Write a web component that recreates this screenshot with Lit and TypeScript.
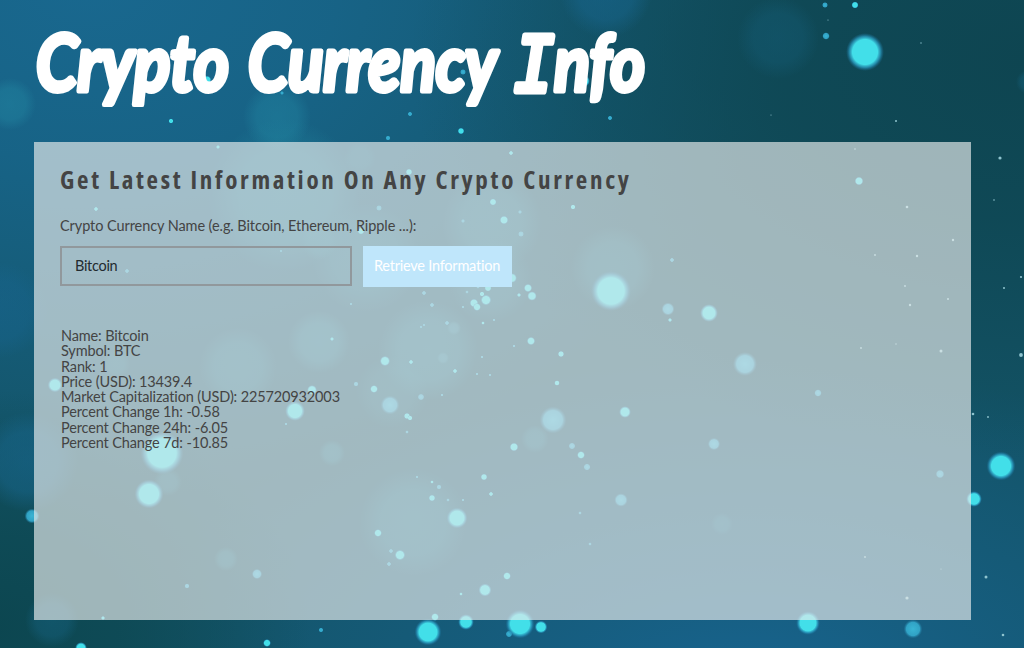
import { LitElement, html, svg, css } from "lit";
import { customElement, property, state } from "lit/decorators.js";

type Dot = [number, number, number];

// Sharp, fully lit particles: x, y, radius
const BRIGHT: Dot[] = [
  [865, 52, 19], [855, 5, 3.6], [207, 80, 4.5], [171, 121, 2.6], [461, 131, 3.4], [584, 81, 6], [218, 147, 2],
  [409, 172, 3.4], [96, 209, 2.2], [493, 202, 3.6], [511, 153, 2.2], [573, 207, 2.6], [859, 181, 4.4], [504, 220, 4.4],
  [361, 231, 3.6], [488, 288, 3.6], [482, 294, 2.6], [486, 300, 5.4], [474, 303, 4.4], [477, 307, 4], [332, 339, 2],
  [385, 361, 5.2], [411, 362, 2.2], [374, 389, 4], [312, 390, 5], [295, 411, 10], [55, 385, 7.4], [407, 416, 3.2],
  [410, 418, 2.6], [512, 278, 5], [528, 288, 4.2], [532, 296, 4.8], [519, 295, 2], [611, 291, 20],
  [709, 313, 9], [531, 341, 4.2], [561, 354, 3.2], [557, 383, 2.8], [625, 412, 6], [670, 320, 2],
  [162, 453, 21.5], [149, 494, 14.5], [432, 498, 3.4], [484, 477, 3.4], [491, 494, 2.2], [457, 518, 10.5],
  [378, 533, 4], [400, 555, 5.4], [485, 590, 6.6], [507, 576, 4], [435, 617, 4], [466, 622, 8],
  [428, 632, 13.5], [267, 643, 4], [81, 648, 6], [514, 447, 4.4], [581, 455, 4], [1001, 466, 14.5],
  [974, 499, 8], [520, 624, 14.5], [541, 627, 6.5], [808, 623, 12], [103, 618, 2], [461, 594, 1.8],
  [483, 323, 1.8], [455, 371, 2.2], [432, 482, 1.8],
];

// Dimmer blue particles
const DIM: Dot[] = [
  [825, 5, 3], [826, 36, 3.8], [610, 118, 2.4], [282, 93, 2], [410, 114, 2.4], [388, 138, 2.6], [463, 72, 3],
  [379, 208, 3], [520, 212, 2], [521, 234, 3], [463, 221, 2], [127, 271, 2.2], [424, 293, 2.2], [432, 305, 2.2],
  [467, 292, 1.8], [478, 287, 1.8], [463, 307, 1.4], [494, 320, 1.2], [447, 323, 2.2], [421, 327, 1.2],
  [424, 325, 1.2], [482, 357, 1.6], [477, 374, 1.4], [490, 375, 1.4], [356, 384, 2.6], [421, 397, 3.4],
  [442, 395, 1.4], [390, 405, 9.5], [286, 424, 1.4], [514, 346, 1.6], [672, 260, 2.2], [668, 309, 6.5],
  [745, 364, 12], [553, 420, 13.5], [818, 393, 3.8], [32, 516, 7.5], [407, 432, 1.8], [417, 477, 1.3],
  [439, 487, 2.6], [448, 500, 1.8], [463, 500, 1.3], [391, 551, 2.2], [389, 564, 2.2], [257, 574, 5.2],
  [187, 586, 2.6], [321, 630, 2.5], [572, 446, 3.5], [587, 467, 3.6], [714, 444, 6.2], [621, 500, 6.8],
  [580, 513, 1.8], [590, 544, 1.8], [940, 474, 4.4], [913, 629, 9.5], [351, 304, 1.2], [281, 251, 1.2],
  [509, 634, 3.5],
];

// Tiny whitish specks
const SPECKS: Dot[] = [
  [828, 20, 0.6], [921, 43, 0.7], [771, 115, 0.6], [896, 121, 1], [1000, 158, 1.6], [994, 200, 0.8], [907, 207, 1.3],
  [855, 149, 0.8], [875, 255, 0.9], [917, 256, 1.2], [953, 240, 1.2], [905, 286, 0.9], [910, 305, 1.2], [948, 299, 1],
  [941, 351, 1.5], [1021, 277, 1.1], [1004, 288, 1], [1021, 355, 1.9], [973, 414, 1.3], [988, 417, 0.9],
  [861, 348, 0.9], [896, 344, 0.7], [865, 557, 0.9], [907, 598, 1.6], [986, 577, 1.5], [1003, 635, 1.3], [941, 569, 0.6],
];

// Large out-of-focus discs: x, y, radius, fill, opacity
const HAZE: [number, number, number, string, number][] = [
  [10, 104, 26, "#1f7d9b", 0.7], [277, 117, 34, "#1f7d9b", 0.65], [606, -8, 46, "#17648a", 0.65],
  [778, 38, 41, "#15607c", 0.4], [0, 310, 48, "#17648d", 0.5], [28, 462, 50, "#18668c", 0.6], [52, 620, 27, "#15607c", 0.55],
  [413, 522, 54, "#2186a0", 0.42], [226, 559, 12, "#2186a0", 0.4], [332, 453, 13, "#2186a0", 0.45],
  [168, 482, 14, "#2186a0", 0.35], [722, 524, 11, "#2186a0", 0.35], [535, 439, 14, "#2186a0", 0.4],
  [613, 268, 42, "#2186a0", 0.38], [238, 367, 39, "#2186a0", 0.42], [319, 342, 31, "#2186a0", 0.5],
  [428, 350, 50, "#2186a0", 0.46], [392, 392, 36, "#2186a0", 0.25], [366, 258, 54, "#2186a0", 0.36],
  [492, 222, 50, "#2186a0", 0.42], [490, 280, 42, "#2186a0", 0.32], [284, 195, 76, "#2186a0", 0.5],
  [360, 158, 16, "#2186a0", 0.25], [319, 242, 18, "#2186a0", 0.3], [116, 364, 14, "#2186a0", 0.3],
  [454, 328, 7, "#3ba2c0", 0.35], [443, 358, 6, "#3ba2c0", 0.35], [1028, 82, 12, "#15607c", 0.5],
];

@customElement("particle-field")
export class ParticleField extends LitElement {
  static styles = css`
    :host {
      display: block;
      background:
        radial-gradient(ellipse 320px 240px at -10px 630px, #0c4650 0%, rgba(13, 72, 82, 0.8) 40%, rgba(14, 74, 86, 0) 100%),
        radial-gradient(ellipse 620px 400px at 1030px 60px, #0e4551 0%, rgba(14, 70, 82, 0.8) 40%, rgba(16, 76, 92, 0) 100%),
        radial-gradient(ellipse 640px 330px at 750px 690px, #18648f 0%, rgba(23, 97, 136, 0.8) 30%, rgba(22, 92, 124, 0) 100%),
        radial-gradient(ellipse 700px 520px at 90px -20px, #19688f 0%, rgba(24, 102, 140, 0.85) 35%, rgba(22, 94, 124, 0) 100%),
        #135366;
    }
    svg {
      display: block;
      width: 100%;
      height: 100%;
    }
  `;

  render() {
    return html`
      <svg viewBox="0 0 1024 648" preserveAspectRatio="xMidYMid slice" aria-hidden="true">
        <defs>
          <radialGradient id="bright">
            <stop offset="0" stop-color="#42dfe9" />
            <stop offset=".66" stop-color="#42dfe9" />
            <stop offset=".82" stop-color="#2b9fc4" stop-opacity=".75" />
            <stop offset="1" stop-color="#1a6f9c" stop-opacity="0" />
          </radialGradient>
          <radialGradient id="dim">
            <stop offset="0" stop-color="#39b4d4" />
            <stop offset=".7" stop-color="#32a6c9" stop-opacity=".95" />
            <stop offset="1" stop-color="#1f789f" stop-opacity="0" />
          </radialGradient>
        </defs>
        ${HAZE.map(([x, y, r, fill, o], i) => svg`
          <radialGradient id="h${i}">
            <stop offset="0" stop-color=${fill} stop-opacity=${o} />
            <stop offset=".6" stop-color=${fill} stop-opacity=${o * 0.85} />
            <stop offset="1" stop-color=${fill} stop-opacity="0" />
          </radialGradient>
          <circle cx=${x} cy=${y} r=${r} fill="url(#h${i})" />`)}
        ${DIM.map(([x, y, r]) => svg`<circle cx=${x} cy=${y} r=${r} fill="url(#dim)" />`)}
        ${BRIGHT.map(([x, y, r]) => svg`<circle cx=${x} cy=${y} r=${r} fill="url(#bright)" />`)}
        ${SPECKS.map(([x, y, r]) => svg`<circle cx=${x} cy=${y} r=${r} fill="#8fc4cf" />`)}
      </svg>
    `;
  }
}

@customElement("brush-title")
export class BrushTitle extends LitElement {
  static styles = css`
    :host {
      display: block;
    }
    h1 {
      margin: 0;
      line-height: 0;
    }
    svg {
      display: block;
      width: 660px;
      height: 142px;
    }
    text {
      font: italic 700 78px Lato, "Open Sans", sans-serif;
      fill: #fff;
      stroke: #fff;
      stroke-width: 5px;
      stroke-linejoin: round;
    }
    .slab {
      font-family: "Liberation Mono", monospace;
      font-weight: 400;
      font-size: 84px;
      stroke-width: 7px;
    }
  `;

  render() {
    return html`
      <h1>
        <svg viewBox="0 0 660 142" role="img">
          <text x="36" y="91" textLength="193" lengthAdjust="spacingAndGlyphs">Crypto</text>
          <text x="248" y="91" textLength="249" lengthAdjust="spacingAndGlyphs">Currency</text>
          <text x="513" y="91"><tspan class="slab" textLength="41" lengthAdjust="spacingAndGlyphs">I</tspan><tspan x="554" textLength="91" lengthAdjust="spacingAndGlyphs">nfo</tspan></text>
        </svg>
      </h1>
    `;
  }
}

@customElement("coin-details")
export class CoinDetails extends LitElement {
  static styles = css`
    :host {
      display: block;
    }
    .line {
      line-height: 15.3px;
      white-space: nowrap;
    }
  `;

  @property({ attribute: false }) rows: [string, string][] = [];

  render() {
    return this.rows.map(([k, v]) => html`<div class="line">${k}: ${v}</div>`);
  }
}

@customElement("app-root")
export class AppRoot extends LitElement {
  static styles = css`
    :host {
      display: grid;
      width: 100%;
      height: 100vh;
      overflow: hidden;
      font-family: Lato, "Open Sans", sans-serif;
      font-size: 14.5px;
      letter-spacing: -0.14px;
      color: #444;
    }
    particle-field,
    .page {
      grid-area: 1 / 1;
      min-height: 0;
    }
    .page {
      z-index: 1;
      display: flex;
      flex-direction: column;
    }
    .panel {
      box-sizing: border-box;
      width: 937px;
      height: 478px;
      margin-left: 34px;
      padding: 20px 26px;
      background: rgba(231, 235, 236, 0.67);
    }
    h2 {
      margin: 0;
      font-family: "Open Sans", sans-serif;
      font-stretch: 75%;
      font-weight: 700;
      font-size: 25px;
      line-height: 34px;
      letter-spacing: 2.68px;
      white-space: nowrap;
      color: #444;
    }
    label {
      display: block;
      margin-top: 20px;
      line-height: 20px;
      letter-spacing: -0.08px;
    }
    form {
      display: flex;
      gap: 11px;
      margin-top: 10px;
    }
    input {
      box-sizing: border-box;
      width: 292px;
      height: 40px;
      margin: 0;
      padding: 0 13px 1px;
      border: 2px solid #91989c;
      border-radius: 0;
      outline: 0;
      background: transparent;
      font: inherit;
      letter-spacing: -0.3px;
      color: #222b2f;
    }
    button {
      width: 149px;
      height: 41px;
      padding: 0 1px 2px 0;
      border: 0;
      background: #bfe6fb;
      color: #fff;
      font: inherit;
      letter-spacing: -0.22px;
      white-space: nowrap;
    }
    coin-details {
      margin: 41px 0 0 1px;
    }
  `;

  @state() private coin = "Bitcoin";

  private rows: [string, string][] = [
    ["Name", "Bitcoin"],
    ["Symbol", "BTC"],
    ["Rank", "1"],
    ["Price (USD)", "13439.4"],
    ["Market Capitalization (USD)", "225720932003"],
    ["Percent Change 1h", "-0.58"],
    ["Percent Change 24h", "-6.05"],
    ["Percent Change 7d", "-10.85"],
  ];

  render() {
    return html`
      <particle-field></particle-field>
      <div class="page">
        <brush-title></brush-title>
        <main class="panel">
          <h2>Get Latest Information On Any Crypto Currency</h2>
          <label for="coin">Crypto Currency Name (e.g. Bitcoin, Ethereum, Ripple ...):</label>
          <form @submit=${(e: Event) => e.preventDefault()}>
            <input id="coin" .value=${this.coin}
              @input=${(e: Event) => (this.coin = (e.target as HTMLInputElement).value)} />
            <button type="submit">Retrieve Information</button>
          </form>
          <coin-details .rows=${this.rows}></coin-details>
        </main>
      </div>
    `;
  }
}
